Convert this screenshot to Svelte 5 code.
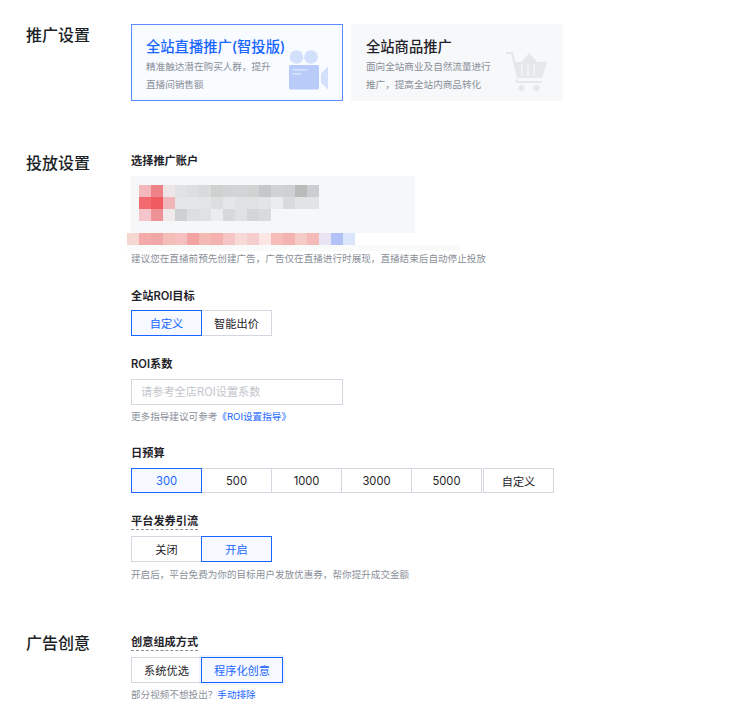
<script>
  const row1 = ['#f2b8bc','#ee8287','#eee6e6','#e0e2e3','#dcdfe1','#d8dadb','#cfd1d0','#d1d3d4','#d2d4d5','#d1d3d2','#c4c8cb','#d0d2d4','#cfd0d1','#babcbc','#cbcdd2'];
  const row2 = ['#f26a70','#ef5b5f','#efb5b9','#e4e6e8','#e4e6e8','#e2e4e5','#dcdee0','#e4e6e8','#dfe1e3','#dfe1e3','#e2e4e6','#ebecee','#d8dadc','#e1e3e5','#e1e3e5'];
  const row3 = ['#f4c5ca','#ef9298','#f1eaea','#cdd1d1','#dbdfe1','#dfe1e2','#ebecee','#d6d8da','#dfe1e2','#d3d5d7','#d8dadb'];
  const strip = ['#f6d6d0','#f3aaa9','#f0a8a6','#f4bdb8','#f5c0bf','#f2a3a2','#f5b9b3','#f3b2ad','#f6c5c5','#f7d9d7','#f6cdcd','#fce6e3','#f5bcb8','#f3b4b0','#f5cbc7','#f4bab7','#e8e4f4','#b3c2f6','#dbe5fb'];

  const budgets = ['300', '500', '1000', '3000', '5000'];
</script>

<div class="page">
  <section class="sec first">
    <h2>推广设置</h2>
    <div class="body cards">
      <div class="card active">
        <h3>全站直播推广(智投版)</h3>
        <p>精准触达潜在购买人群，提升<br />直播间销售额</p>
        <svg class="card-icon" width="40" height="42" viewBox="0 0 40 42" aria-hidden="true">
          <circle cx="7.5" cy="7" r="6.8" fill="#d3e0fb" />
          <circle cx="22" cy="7" r="6.8" fill="#d3e0fb" />
          <rect x="0" y="15" width="30" height="24.5" rx="1.5" fill="#b9cbf9" />
          <rect x="3.5" y="19" width="15" height="1.5" fill="#dbe5fd" />
          <rect x="3.5" y="23" width="9" height="1.5" fill="#dbe5fd" />
          <path d="M32 23.5 39 16.5V39.5L32 33Z" fill="#d3e0fb" />
        </svg>
      </div>
      <div class="card">
        <h3>全站商品推广</h3>
        <p>面向全站商业及自然流量进行<br />推广，提高全站内商品转化</p>
        <svg class="card-icon cart" width="42" height="42" viewBox="0 0 42 42" aria-hidden="true">
          <path d="M0 1H6L12 26" fill="none" stroke="#e5e7e9" stroke-width="2" />
          <path d="M8 10H41L36 26H12Z" fill="#e5e7e9" />
          <path d="M16 10 23 1 31 10Z" fill="#e5e7e9" />
          <path d="M16 12V24M22 12V24M28 12V24" stroke="#f7f8fa" stroke-width="1.2" />
          <path d="M36 30H12Q10 30 10.5 27.5" fill="none" stroke="#e5e7e9" stroke-width="2" />
          <circle cx="15.5" cy="36" r="3" fill="#e5e7e9" />
          <circle cx="30.5" cy="36" r="3" fill="#e5e7e9" />
        </svg>
      </div>
    </div>
  </section>

  <section class="sec second">
    <h2>投放设置</h2>
    <div class="body">
      <div class="label">选择推广账户</div>
      <div class="account">
        {#each [row1, row2, row3] as row}
          <div class="cells">
            {#each row as c}<i style="background:{c}"></i>{/each}
          </div>
        {/each}
      </div>
      <div class="cells strip">
        {#each strip as c}<i style="background:{c}"></i>{/each}
      </div>
      <div class="faint"></div>
      <div class="hint account-hint">建议您在直播前预先创建广告，广告仅在直播进行时展现，直播结束后自动停止投放</div>

      <div class="label field goal">全站ROI目标</div>
      <div class="seg">
        <button class="on">自定义</button>
        <button>智能出价</button>
      </div>

      <div class="label field tight">ROI系数</div>
      <input class="roi" type="text" placeholder="请参考全店ROI设置系数" />
      <div class="hint loose">更多指导建议可参考<span class="link">《ROI设置指导》</span></div>

      <div class="label field">日预算</div>
      <div class="seg budget">
        {#each budgets as b, i}
          <button class:on={i === 0}>{b}</button>
        {/each}
        <button class="custom">自定义</button>
      </div>

      <div class="label field tight"><span class="dashed">平台发券引流</span></div>
      <div class="seg">
        <button>关闭</button>
        <button class="on">开启</button>
      </div>
      <div class="hint coupon-hint">开启后，平台免费为你的目标用户发放优惠券，帮你提升成交金额</div>
    </div>
  </section>

  <section class="sec third">
    <h2>广告创意</h2>
    <div class="body">
      <div class="label"><span class="dashed">创意组成方式</span></div>
      <div class="seg">
        <button>系统优选</button>
        <button class="on glow">程序化创意</button>
      </div>
      <div class="hint loose">部分视频不想投出？<span class="link">手动排除</span></div>
    </div>
  </section>
</div>

<style>
  :global(body) {
    background: #fff;
  }

  .page {
    font-family: Inter, "Noto Sans CJK SC", sans-serif;
    color: #1f2329;
    padding: 24px 0 0 26px;
  }

  .sec {
    display: flex;
  }
  .second {
    margin-top: 52px;
  }
  .third {
    margin-top: 52px;
  }

  h2 {
    width: 105px;
    flex-shrink: 0;
    margin: 0;
    font-size: 16px;
    line-height: 22px;
    font-weight: 500;
    color: #1b1f26;
  }
  .second h2 {
    margin-top: -1px;
  }
  .third h2 {
    margin-top: -2px;
  }
  .body {
    min-width: 0;
  }

  .cards {
    display: flex;
    gap: 8px;
  }
  .card {
    position: relative;
    box-sizing: border-box;
    width: 212px;
    height: 77px;
    padding: 13px 14px;
    background: #f7f8fa;
    border: 1px solid #f7f8fa;
  }
  .card h3 {
    margin: 0 0 2px;
    font-size: 14.3px;
    line-height: 18px;
    font-weight: 500;
    color: #1f2329;
    white-space: nowrap;
  }
  .card p {
    margin: 0;
    font-size: 9.6px;
    line-height: 18px;
    color: #8a8f99;
    white-space: nowrap;
  }
  .card.active {
    background: #f8fbff;
    border-color: #5b8cff;
  }
  .card.active h3 {
    color: #1966ff;
  }
  .card-icon {
    position: absolute;
    right: 13px;
    top: 25px;
  }
  .card-icon.cart {
    right: 14px;
    top: 27px;
  }

  .label {
    font-size: 11.2px;
    line-height: 16px;
    font-weight: 600;
    color: #1f2329;
  }
  .field {
    margin-top: 21px;
  }
  .field.goal {
    margin-top: 22px;
  }
  .field.tight {
    margin-top: 20px;
  }
  .dashed {
    display: inline-block;
    line-height: 15px;
    border-bottom: 1px dashed #8a8f99;
  }

  .account {
    width: 284px;
    height: 57px;
    box-sizing: border-box;
    margin-top: 7px;
    padding: 9px 0 0 8px;
    background: #f6f7f9;
  }
  .cells {
    display: flex;
    height: 12px;
  }
  .cells i {
    display: block;
    width: 12px;
    height: 12px;
  }
  .strip {
    margin-left: -4px;
  }
  .faint {
    width: 332px;
    height: 6px;
    margin-left: -4px;
    background: #f9fafa;
  }

  .hint {
    margin-top: 4px;
    font-size: 9.6px;
    line-height: 14px;
    color: #8a8f99;
    white-space: nowrap;
  }
  .account-hint {
    margin-top: 1px;
  }
  .hint.loose {
    margin-top: 5px;
  }
  .hint.coupon-hint {
    margin-top: 6px;
  }
  .link {
    color: #1966ff;
  }

  .seg {
    display: flex;
    margin-top: 6px;
  }
  .seg.budget {
    margin-top: 7px;
  }
  .seg button {
    box-sizing: border-box;
    min-width: 71px;
    height: 26px;
    margin: 0 0 0 -1px;
    padding: 0 12px;
    background: #fff;
    border: 1px solid #d5d7e0;
    border-radius: 0;
    font: inherit;
    font-size: 11.2px;
    color: #1f2329;
    cursor: pointer;
  }
  .seg.budget button {
    height: 25px;
  }
  .seg button:first-child {
    margin-left: 0;
  }
  .seg button.on {
    position: relative;
    background: #f6f9ff;
    border-color: #1966ff;
    color: #1966ff;
  }
  .seg button.glow {
    box-shadow: 0 0 0 2px rgba(25, 102, 255, 0.07);
  }
  .seg button.custom {
    margin-left: 1px;
  }

  .roi {
    display: block;
    box-sizing: border-box;
    width: 212px;
    height: 26px;
    margin-top: 7px;
    padding: 0 9px;
    background: #fff;
    border: 1px solid #d5d7e0;
    border-radius: 0;
    outline: none;
    font: inherit;
    font-size: 11.2px;
  }
  .roi::placeholder {
    color: #c3c6cc;
  }
</style>
